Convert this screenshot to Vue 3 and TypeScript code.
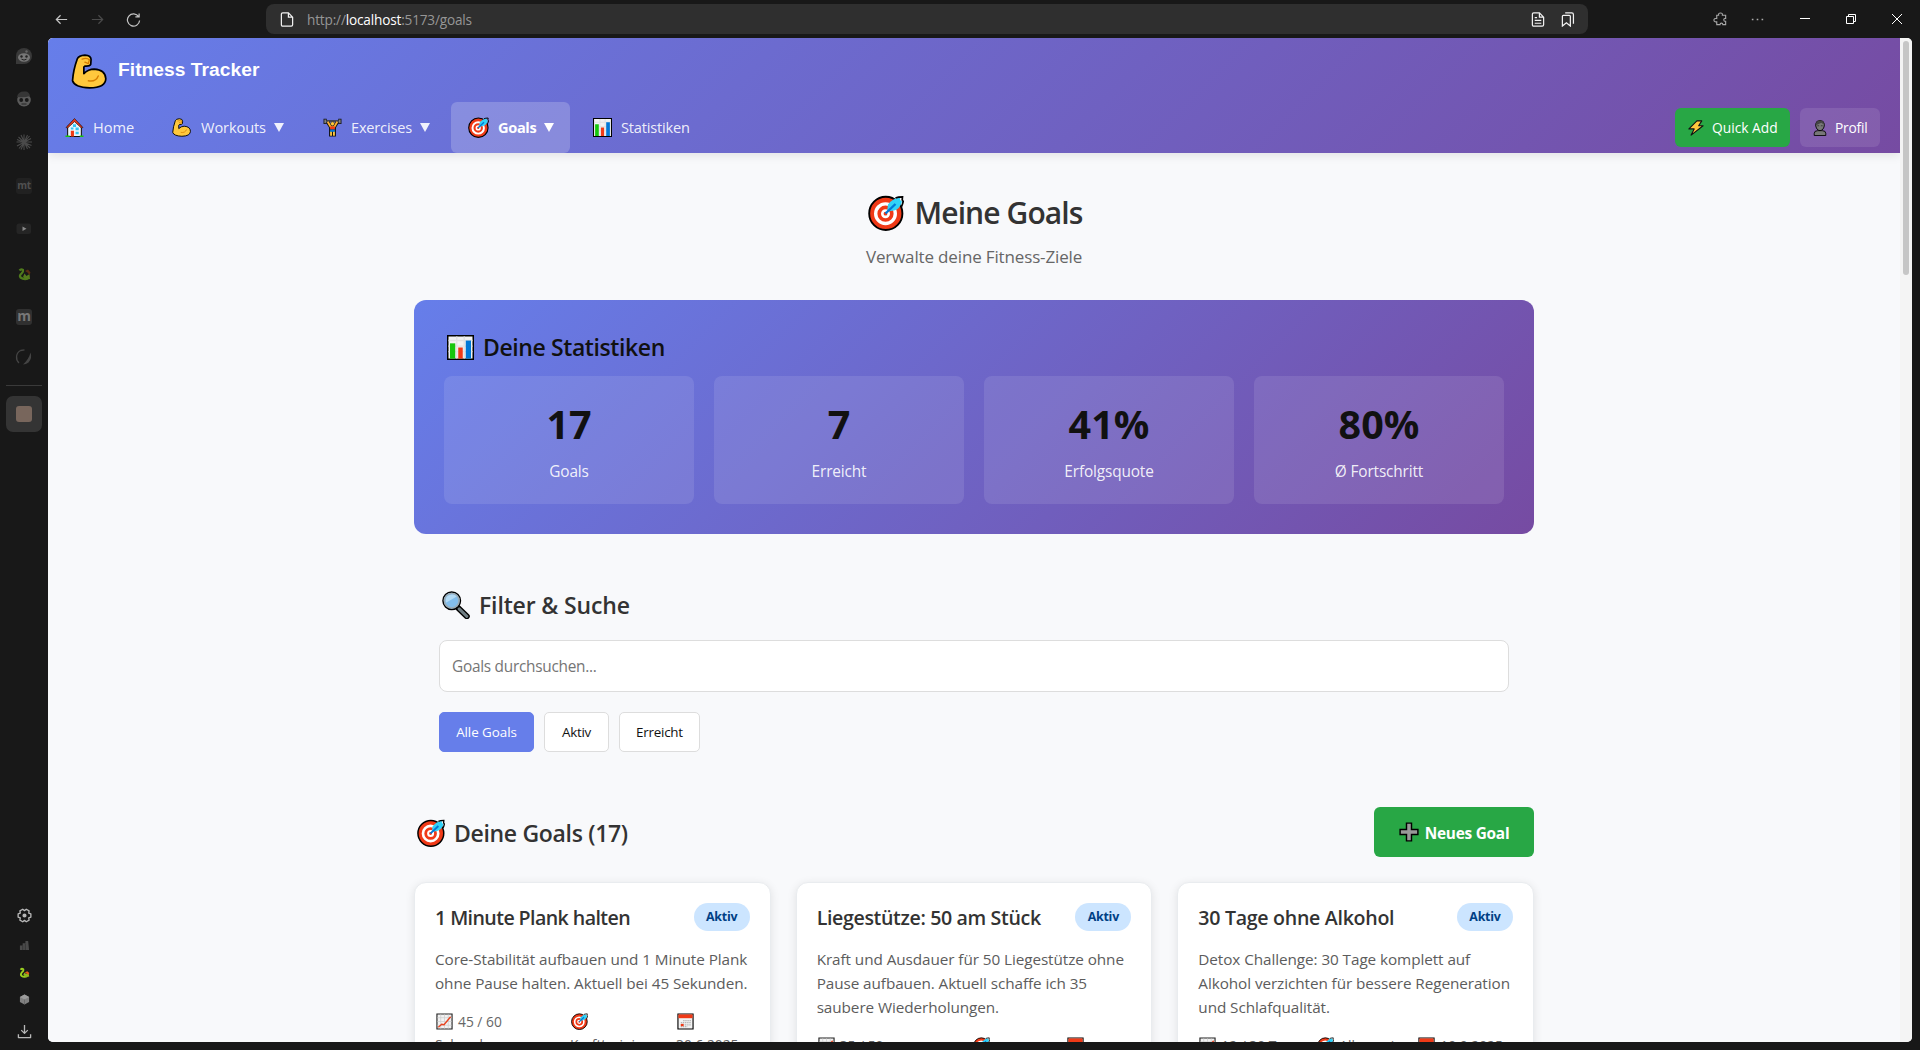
<script setup lang="ts">
interface NavItem { id: string; label: string; icon: string; menu: boolean; active?: boolean }
interface Meta { icon: string; lines: string[] }
interface Goal { id: string; title: string; text: string[]; meta: Meta[] }

const sideTabs: string[] = ['reddit', 'mask', 'burst', 'mt', 'video', 'dragon', 'moodle', 'swirl']

const navItems: NavItem[] = [
  { id: 'home', label: 'Home', icon: 'house', menu: false },
  { id: 'workouts', label: 'Workouts', icon: 'arm', menu: true },
  { id: 'exercises', label: 'Exercises', icon: 'lifter', menu: true },
  { id: 'goals', label: 'Goals', icon: 'target', menu: true, active: true },
  { id: 'stats', label: 'Statistiken', icon: 'bars', menu: false },
]

const stats = [
  { value: '17', label: 'Goals' },
  { value: '7', label: 'Erreicht' },
  { value: '41%', label: 'Erfolgsquote' },
  { value: '80%', label: 'Ø Fortschritt' },
]

const filters = ['Alle Goals', 'Aktiv', 'Erreicht']

const goals: Goal[] = [
  {
    id: 'plank',
    title: '1 Minute Plank halten',
    text: ['Core-Stabilität aufbauen und 1 Minute Plank', 'ohne Pause halten. Aktuell bei 45 Sekunden.'],
    meta: [
      { icon: 'trend', lines: ['45 / 60', 'Sekunden'] },
      { icon: 'target', lines: ['', 'Krafttraining'] },
      { icon: 'calendar', lines: ['', '30.6.2025'] },
    ],
  },
  {
    id: 'pushups',
    title: 'Liegestütze: 50 am Stück',
    text: ['Kraft und Ausdauer für 50 Liegestütze ohne', 'Pause aufbauen. Aktuell schaffe ich 35', 'saubere Wiederholungen.'],
    meta: [
      { icon: 'trend', lines: ['35 / 50'] },
      { icon: 'target', lines: [''] },
      { icon: 'calendar', lines: [''] },
    ],
  },
  {
    id: 'detox',
    title: '30 Tage ohne Alkohol',
    text: ['Detox Challenge: 30 Tage komplett auf', 'Alkohol verzichten für bessere Regeneration', 'und Schlafqualität.'],
    meta: [
      { icon: 'trend', lines: ['12 / 30 Tage'] },
      { icon: 'target', lines: ['Allgemein'] },
      { icon: 'calendar', lines: ['10.9.2025'] },
    ],
  },
]
</script>

<template>
  <div class="browser">
    <svg class="sprite" aria-hidden="true">
      <symbol id="arm" viewBox="-2 -2 104 102">
        <path d="M16 12Q20 2 38 1Q56 2 56 14L55 28Q52 34 38 33L35 36V55Q48 42 65 42Q98 44 99 70Q98 96 52 97Q8 95 2 76Q4 45 16 12Z" fill="#ffc83d" stroke="#000" stroke-width="5" stroke-linejoin="round" />
        <path d="M30 13Q44 8 51 15L48 26L38 22M48 76Q70 80 77 62" fill="none" stroke="#d67d00" stroke-width="4" stroke-linecap="round" />
      </symbol>
      <symbol id="target" viewBox="0 0 36 36">
        <circle cx="17.8" cy="18.4" r="16.6" fill="#f03a17" stroke="#000" stroke-width="1.9" />
        <circle cx="17.5" cy="18.7" r="9.8" fill="none" stroke="#fff" stroke-width="3.4" />
        <circle cx="17.5" cy="18.7" r="3.2" fill="#f03a17" stroke="#fff" stroke-width="2.6" />
        <path d="M19 16.500L20 9.500Q25 3 32 2.500L32 5L34 6.500Q32 14 26 15.500Z" fill="#31d2f7" />
        <path d="M27.500 3Q30 1.800 34.500 1.800L34.200 4.800L35.200 6.500Q34.800 9 33.500 11.500" fill="none" stroke="#000" stroke-width="1.700" />
        <path d="M17.500 18.500L27.500 9" stroke="#0078d7" stroke-width="2.400" />
      </symbol>
      <symbol id="bars" viewBox="0 0 36 36" preserveAspectRatio="none">
        <path d="M1 1H35V35H1Z" fill="#f2f2f2" stroke="#000" stroke-width="2" />
        <path d="M13 2V34M23 2V34M2 8H34M2 16H34M2 24H34" stroke="#e2e2e2" stroke-width="2" />
        <path d="M4 12H11V34H4Z" fill="#16c60c" />
        <path d="M15 18H21V34H15Z" fill="#f03a17" />
        <path d="M25 8H32V34H25Z" fill="#0078d7" />
      </symbol>
      <symbol id="trend" viewBox="0 0 36 36">
        <path d="M2 2H34V34H2Z" fill="#f2f2f2" stroke="#222" stroke-width="2.4" />
        <path d="M10 3V33M18 3V33M26 3V33M3 10H33M3 18H33M3 26H33" stroke="#cfcfcf" stroke-width="1.6" />
        <path d="M5 30L12 24L17 25L31 8" fill="none" stroke="#e8431f" stroke-width="3" />
      </symbol>
      <symbol id="calendar" viewBox="0 0 36 36">
        <path d="M2 2H34V34H2Z" fill="#f2f2f2" stroke="#000" stroke-width="2.4" />
        <path d="M3 3H33V11H3Z" fill="#f03a17" />
        <path d="M13 16H30M8 20.5H30M8 25H30M8 29H22" stroke="#b5b5b5" stroke-width="2.6" stroke-dasharray="3 1.5" />
        <path d="M8 23H14V28H8Z" fill="#f03a17" />
      </symbol>
      <symbol id="house" viewBox="0 0 36 36">
        <path d="M5 16L18 4L31 16V35H5Z" fill="#eef4fa" stroke="#111" stroke-width="2" />
        <path d="M18 1L34 18L31 19L18 7L5 19L2 18Z" fill="#e8371b" stroke="#111" stroke-width="1.2" />
        <path d="M11 24H17V35H11Z" fill="#f03a17" />
        <path d="M15 12H21V17H15ZM11 18H16V22H11ZM20 18H26V23H20ZM20 26H26V31H20Z" fill="#31c5f4" />
        <path d="M1 33H9V36H1ZM28 33H35V36H28Z" fill="#16c60c" />
      </symbol>
      <symbol id="lifter" viewBox="0 0 36 36">
        <path d="M2 6H34" stroke="#111" stroke-width="3.5" />
        <path d="M4 1.500V11.500M32 1.500V11.500" stroke="#111" stroke-width="6" />
        <path d="M4 6H32" stroke="#aaa" stroke-width="1.2" />
        <path d="M4 3V10M32 3V10" stroke="#999" stroke-width="2.4" />
        <path d="M9 8L15 17.500H21L27 8" fill="none" stroke="#111" stroke-width="6.5" stroke-linejoin="round" />
        <path d="M11.500 16H24.500V35H11.500Z" fill="#111" />
        <path d="M9 7L15 17.500H21L27 7" fill="none" stroke="#ffb02e" stroke-width="3.6" stroke-linejoin="round" />
        <path d="M13.500 25H17V33.500H13.500ZM19 25H22.500V33.500H19Z" fill="#ffc83d" />
        <circle cx="18" cy="11" r="3.800" fill="#ffc83d" stroke="#111" stroke-width=".8" />
        <path d="M13.500 16H22.500V22H13.500Z" fill="#f03a17" />
        <path d="M13.500 22H22.500V26H13.500Z" fill="#0078d7" />
      </symbol>
      <symbol id="bolt" viewBox="0 0 36 36">
        <path d="M20 2H31L24 13H34L7 34L14 20H2Z" fill="#ffc83d" stroke="#111" stroke-width="2.4" stroke-linejoin="round" />
      </symbol>
      <symbol id="person" viewBox="0 0 30 36">
        <path d="M2 35V30Q2 24 10 24H20Q28 24 28 30V35Z" fill="#777" stroke="#000" stroke-width="2" />
        <path d="M5 10Q6 1 15 1Q24 1 25 10Q24 23 15 24Q6 23 5 10Z" fill="#777" stroke="#000" stroke-width="2" />
        <path d="M5 10Q7 1 15 1Q24 1 25 11L18 6L7 11Z" fill="#444" />
        <path d="M9 13H13M17 13H21" stroke="#333" stroke-width="2" />
      </symbol>
      <symbol id="lens" viewBox="0 0 36 36">
        <path d="M20 21L32 32.5" stroke="#000" stroke-width="7.5" stroke-linecap="round" />
        <path d="M22 23L32 32.5" stroke="#6f7d82" stroke-width="4" stroke-linecap="round" />
        <circle cx="12.5" cy="12.5" r="11.2" fill="#83beec" stroke="#000" stroke-width="2" />
        <circle cx="12.5" cy="12.5" r="9.4" fill="none" stroke="#9cabb3" stroke-width="2" />
        <path d="M5 15Q3 5 13 4.500Q17 4.500 19 7Z" fill="#b3dbf5" />
      </symbol>
      <symbol id="plus" viewBox="0 0 36 36">
        <path d="M13.500 2H22.500V13.500H34V22.500H22.500V34H13.500V22.500H2V13.500H13.500Z" fill="#999" stroke="#000" stroke-width="2.6" />
      </symbol>

      <symbol id="reddit" viewBox="0 0 24 24">
        <circle cx="12" cy="12" r="8" fill="#393939" /><path d="M4 12V20H12Z" fill="#393939" />
        <ellipse cx="12" cy="13.500" rx="6" ry="4.200" fill="#777" />
        <circle cx="9.500" cy="12.500" r="1.200" fill="#222" /><circle cx="14.500" cy="12.500" r="1.200" fill="#222" />
        <path d="M9.500 15.200Q12 17 14.500 15.200" stroke="#222" fill="none" /><circle cx="14.500" cy="7.500" r="1.200" fill="#666" />
      </symbol>
      <symbol id="mask" viewBox="0 0 24 24">
        <ellipse cx="12" cy="13" rx="6.800" ry="6.500" fill="#5b5b5b" />
        <path d="M5 10Q6 4 13 4.500Q17 4 18 9Q12 11 5 10Z" fill="#363636" />
        <circle cx="9.200" cy="13" r="1.900" fill="#181818" /><circle cx="14.800" cy="13" r="1.900" fill="#181818" />
        <path d="M9.500 17H14.500" stroke="#252525" />
      </symbol>
      <symbol id="burst" viewBox="0 0 24 24">
        <path d="M12 4.500V20M4.500 12H20M6.500 7L18 18M17.500 6L7 18.500M9 5L15.500 19M15.500 5L9 19.500M5 9.500L19.500 15.500M19 8.500L5 16" stroke="#4a4a4a" stroke-width="1.100" />
      </symbol>
      <symbol id="video" viewBox="0 0 24 24">
        <rect x="4.500" y="7.500" width="14.500" height="10.500" rx="2.500" fill="#252525" /><path d="M10.500 10.500L14.500 12.800L10.500 15Z" fill="#8a8a8a" />
      </symbol>
      <symbol id="dragon" viewBox="0 0 24 24">
        <path d="M7.500 11.500Q9 9.500 11 11Q11.500 13 9.500 14.500Q7 16.500 8.500 18.500Q12 21 16 19.500" fill="none" stroke="#4f7a1c" stroke-width="2.200" />
        <path d="M11 18L12.500 14.500L14.500 17L17.500 15L18 20L14 20.500Z" fill="#557a1c" />
        <path d="M13 12L16 10.500L18.500 13.500L17.500 16L15.500 13.500Z" fill="#5b2e12" />
      </symbol>
      <symbol id="swirl" viewBox="0 0 24 24">
        <path d="M8.500 5.500C3.500 8 3.500 15 7 18M8.500 5.500L12.500 4.800" fill="none" stroke="#444" stroke-width="1.300" />
        <path d="M18.500 7.500Q20.500 13 16.500 17.500Q14 19.500 11 19.500Q17 14 18.500 7.500Z" fill="#444" />
      </symbol>
    </svg>

    <header class="topbar">
      <div class="history">
        <svg viewBox="0 0 16 16"><path d="M14 8H2.500M7 3.500L2.500 8L7 12.500" /></svg>
        <svg class="dim" viewBox="0 0 16 16"><path d="M2 8H13.500M9 3.500L13.500 8L9 12.500" /></svg>
        <svg viewBox="0 0 16 16"><path d="M13.500 5A6.500 6.500 0 1 0 14.500 9M14 1.500V5.300H10" /></svg>
      </div>
      <div class="address">
        <svg class="doc" viewBox="0 0 14 16"><path d="M2.500 1H8.500L13 5.500V13.500Q13 15 11.500 15H2.500Q1 15 1 13.500V2.500Q1 1 2.500 1ZM8.500 1V5.500H13" /></svg>
        <span class="url">http://<b>localhost</b>:5173/goals</span>
        <svg class="doc reader" viewBox="0 0 14 16"><path d="M2.500 1H8.500L13 5.500V13.500Q13 15 11.500 15H2.500Q1 15 1 13.500V2.500Q1 1 2.500 1ZM8.500 1V5.500H13M3.500 6H6M3.500 9H10.500M3.500 12H10.500" /></svg>
        <svg class="doc" viewBox="0 0 14 16"><path d="M1 4.500Q1 3.500 2 3.500H8.500Q9.500 3.500 9.500 4.500V15L5.300 11.500L1 15ZM4 1H11Q12.800 1 12.800 3V12.500" /></svg>
      </div>
      <div class="tools">
        <svg class="puzzle" viewBox="0 0 16 16"><path d="M4 3.500H6Q5.500 1 8 1Q10.500 1 10 3.500H13.500V7Q11.500 6.500 11.500 8.500Q11.500 10 13.500 10V13.500H10.500Q10.500 11.800 9 11.800Q7.500 11.800 7.500 13.500H4V10.500Q1 11 1 8.500Q1 6.500 4 7Z" /></svg>
        <svg class="dots" viewBox="0 0 16 16"><path d="M1 7H3V9H1ZM7 7H9V9H7ZM13 7H15V9H13Z" /></svg>
        <svg class="win" viewBox="0 0 10 10"><path d="M0 4.500H10" /></svg>
        <svg class="win" viewBox="0 0 10 10"><path d="M.5 2.500H7.500V9.500H.5ZM2.500 2.500V.5H9.500V7.500H7.500" /></svg>
        <svg class="win" viewBox="0 0 10 10"><path d="M0 0L10 10M10 0L0 10" /></svg>
      </div>
    </header>

    <div class="body">
      <aside class="side">
        <template v-for="tab in sideTabs" :key="tab">
          <span v-if="tab === 'mt'" class="tile mt">mt</span>
          <span v-else-if="tab === 'moodle'" class="tile moodle">m</span>
          <svg v-else :class="['slot', tab]"><use :href="'#' + tab" /></svg>
        </template>
        <i class="rule"></i>
        <span class="current"><i></i></span>
        <span class="spacer"></span>
        <svg class="tool" viewBox="0 0 16 16"><path d="M14.800 6.300V9.700L12.500 10.600L12.900 13L9.900 14.700L8 13.200L6.100 14.700L3.100 13L3.500 10.600L1.200 9.700V6.300L3.500 5.400L3.100 3L6.100 1.300L8 2.800L9.900 1.300L12.900 3L12.500 5.400Z" /><circle cx="8" cy="8" r="1.500" fill="#bbb" /></svg>
        <svg class="small" viewBox="0 0 12 12"><path d="M1 11V6H4V3.500H7V1H10L11 11Z" fill="#4a4a4a" /><path d="M4 11V6M7 11V4" stroke="#2e2e2e" stroke-width=".7" /></svg>
        <svg class="small" viewBox="6 7 13 14"><path d="M7.500 10.500Q9 8.500 11 10Q11.500 12 9.500 13.500Q7 16 8.500 18Q12 20.500 16 18.500" fill="none" stroke="#9bd020" stroke-width="2.400" /><path d="M11 17L12.500 14L14.500 16L17.500 14L18.500 19L14 20Z" fill="#8fb81d" /><path d="M13 14L16 12.500L18.500 14.500L18 17L15.500 15.500Z" fill="#e35a19" /></svg>
        <svg class="small" viewBox="0 0 12 12"><path d="M6 .5L11 3.200V8.800L6 11.500L1 8.800V3.200Z" fill="#808080" /><path d="M1 3.200L6 6L11 3.200L6 .5Z" fill="#9c9c9c" /><path d="M6 6V11.500" stroke="#5c5c5c" stroke-width=".7" /></svg>
        <svg class="tool last" viewBox="0 0 16 16"><path d="M8 1V10M4.500 6.500L8 10L11.500 6.500M1.500 11V14.500H14.500V11" /></svg>
      </aside>

      <div class="page">
        <div class="content">
          <header class="header">
            <div class="brand">
              <svg><use href="#arm" /></svg>
              <span>Fitness Tracker</span>
            </div>
            <nav class="nav">
              <a v-for="item in navItems" :key="item.id" :class="['link', item.id, { active: item.active }]">
                <svg><use :href="'#' + item.icon" /></svg>
                <span>{{ item.label }}</span>
                <i v-if="item.menu" class="caret"></i>
              </a>
              <div class="actions">
                <button class="quick"><svg><use href="#bolt" /></svg><span>Quick Add</span></button>
                <button class="profile"><svg><use href="#person" /></svg><span>Profil</span></button>
              </div>
            </nav>
          </header>

          <main class="main">
            <h1><svg><use href="#target" /></svg><span>Meine Goals</span></h1>
            <p class="sub">Verwalte deine Fitness-Ziele</p>

            <section class="stats">
              <h2><svg><use href="#bars" /></svg><span>Deine Statistiken</span></h2>
              <div class="stat-grid">
                <div v-for="s in stats" :key="s.label" class="stat">
                  <strong>{{ s.value }}</strong>
                  <span>{{ s.label }}</span>
                </div>
              </div>
            </section>

            <section class="filter">
              <h2><svg><use href="#lens" /></svg><span>Filter &amp; Suche</span></h2>
              <input type="text" placeholder="Goals durchsuchen..." />
              <div class="chips">
                <button v-for="(f, i) in filters" :key="f" :class="{ on: i === 0 }">{{ f }}</button>
              </div>
            </section>

            <section class="goals">
              <div class="goals-head">
                <h2><svg><use href="#target" /></svg><span>Deine Goals (17)</span></h2>
                <button class="new"><svg><use href="#plus" /></svg><span>Neues Goal</span></button>
              </div>
              <div class="cards">
                <article v-for="g in goals" :key="g.id" :class="['card', g.id]">
                  <div class="card-head">
                    <h3>{{ g.title }}</h3>
                    <span class="badge">Aktiv</span>
                  </div>
                  <p><span v-for="line in g.text" :key="line">{{ line }}</span></p>
                  <div class="meta">
                    <div v-for="m in g.meta" :key="m.icon">
                      <span v-for="(line, i) in m.lines" :key="i" class="meta-line">
                        <svg v-if="i === 0"><use :href="'#' + m.icon" /></svg>{{ line }}
                      </span>
                    </div>
                  </div>
                </article>
              </div>
            </section>
          </main>
        </div>
        <div class="scroll"><i></i></div>
      </div>
    </div>
  </div>
</template>

<style>
body { background: #181818; overflow: hidden; }
</style>

<style scoped>
.browser, .browser * { box-sizing: border-box; }
.browser {
  display: flex; flex-direction: column; width: 1920px; height: 1050px; overflow: hidden;
  background: #181818; font-family: "Open Sans", "Noto Sans", sans-serif; letter-spacing: -0.24px;
}
.sprite { position: absolute; width: 0; height: 0; }
svg { display: block; flex: none; }
h1, h2, h3, p { margin: 0; font-weight: 600; white-space: nowrap; }
button { font-family: inherit; letter-spacing: inherit; padding: 0; border: 0; white-space: nowrap; }

.topbar { display: flex; align-items: center; height: 38px; flex: none; }
.history { display: flex; width: 266px; padding-left: 54px; gap: 21px; }
.history svg { width: 15px; height: 15px; fill: none; stroke: #c4c4c4; stroke-width: 1.3; }
.history .dim { stroke: #4a4a4a; }
.address { display: flex; align-items: center; width: 1322px; height: 30px; padding: 0 13px 0 14px; background: #2f2f2f; border-radius: 8px; }
.doc { width: 14px; height: 15px; fill: none; stroke: #f2f2f2; stroke-width: 1.3; }
.url { margin: 1px 0 0 13px; font-size: 13.6px; letter-spacing: -0.17px; color: #969696; flex: 1; }
.url b { font-weight: 400; color: #fff; }
.reader { margin-right: 16px; }
.tools { display: flex; align-items: center; margin-left: 125px; }
.puzzle { width: 15px; height: 15px; fill: none; stroke: #a8a8a8; stroke-width: 1.2; }
.dots { width: 13px; height: 13px; margin: 0 36px 0 23px; fill: #aaa; }
.win { width: 10px; height: 10px; fill: none; stroke: #fff; stroke-width: 1; margin-right: 36px; }
.win:last-child { margin-right: 0; }

.body { display: flex; height: 1004px; }
.side { display: flex; flex-direction: column; align-items: center; width: 48px; padding-top: 6px; }
.slot { width: 24px; height: 24px; margin-bottom: 19px; }
.tile { width: 16px; height: 16px; margin: 5px 0 22px; border-radius: 3px; background: #212121; color: #505050; font-size: 10px; font-weight: 700; line-height: 14px; text-align: center; }
.moodle { background: #303030; color: #777; font-size: 14px; line-height: 14px; margin-top: 7px; margin-bottom: 20px; }
.rule { width: 36px; height: 1px; background: #3a3a3a; margin-top: -3px; }
.current { display: grid; place-items: center; width: 36px; height: 36px; margin-top: 10px; border-radius: 7px; background: #343434; }
.current i { width: 16px; height: 16px; border-radius: 3px; background: #78665c; }
.spacer { flex: 1; }
.tool { width: 15px; height: 15px; fill: none; stroke: #b8b8b8; stroke-width: 1.4; stroke-linejoin: round; }
.small { width: 11px; height: 11px; margin-top: 16px; }
.small:nth-last-child(4) { margin-top: 17px; }
.last { margin: 19px 0 3px; }

.page { display: flex; width: 1864px; height: 1004px; overflow: hidden; border-radius: 5px; background: #f8f9fa; }
.content { width: 1852px; background: #f8f9fb; }
.scroll { width: 12px; padding: 3px; background: #f4f4f4; }
.scroll i { display: block; width: 6px; height: 234px; border-radius: 3px; background: #c6c6c6; }

.header { height: 115px; color: #fff; background: linear-gradient(135deg, #667eea 0%, #764ba2 100%); box-shadow: 0 2px 10px rgba(0, 0, 0, 0.1); }
.brand { display: flex; align-items: center; gap: 11px; height: 64px; padding-left: 23px; font: 700 19.2px/1 "Liberation Sans", Arial, sans-serif; letter-spacing: 0.04px; }
.brand svg { width: 36px; height: 35px; margin-top: 3px; }
.brand span { margin-top: -1px; }
.nav { display: flex; height: 51px; }
.link { display: flex; align-items: center; height: 51px; margin-right: 5px; padding-left: 16px; border-radius: 6px; font-size: 14.6px; letter-spacing: -0.2px; color: rgba(255, 255, 255, 0.9); }
.link svg { width: 19px; height: 19px; margin-right: 10px; }
.link span { margin-top: -2px; }
.link.home { width: 101px; padding-left: 17px; letter-spacing: 0; }
.link.home svg { margin-right: 9px; }
.link.workouts { width: 147px; padding-left: 18px; letter-spacing: -0.1px; }
.link.exercises { width: 140px; padding-left: 17px; letter-spacing: -0.2px; }
.link.exercises svg { margin-right: 9px; }
.link.goals { width: 119px; padding-left: 17px; letter-spacing: -0.35px; }
.link.stats { width: 132px; padding-left: 18px; }
.link.stats svg { margin-right: 9px; }
.active { background: rgba(255, 255, 255, 0.2); color: #fff; font-weight: 700; }
.link.active svg { width: 21px; height: 21px; margin-right: 9px; }
.caret { width: 0; height: 0; margin-left: 8px; border: 5px solid transparent; border-top: 9px solid currentColor; border-bottom: 0; }
.actions { display: flex; gap: 10px; margin: 6px 20px 0 auto; }
.actions button { display: flex; align-items: center; height: 39px; padding-left: 13px; border-radius: 6px; color: #fff; font-size: 13.8px; }
.actions .quick { width: 115px; background: #28a745; letter-spacing: 0; }
.actions .profile { width: 80px; background: rgba(255, 255, 255, 0.1); }
.quick svg { width: 16px; height: 16px; margin-right: 8px; }
.profile svg { width: 14px; height: 16px; margin-right: 8px; }

.main { width: 1120px; margin: 0 auto; padding-top: 37px; color: #333; }
h1 { display: flex; align-items: center; justify-content: center; gap: 11px; height: 44px; padding-left: 2px; font-size: 30px; line-height: 44px; letter-spacing: -0.9px; }
h1 svg { width: 36px; height: 36px; margin-top: 2px; }
h1 span { margin-top: 1px; }
.sub { margin-top: 11px; height: 23px; font-size: 17px; line-height: 23px; letter-spacing: -0.15px; font-weight: 400; color: #666; text-align: center; }
h2 { display: flex; align-items: center; height: 34px; font-size: 23px; line-height: 34px; gap: 9px; }
h2 svg { width: 28px; height: 28px; }

section.stats { height: 234px; margin-top: 32px; padding: 30px; border-radius: 12px; background: linear-gradient(135deg, #667eea 0%, #764ba2 100%); }
.stats h2 { color: #111; padding-left: 3px; letter-spacing: -0.4px; }
.stats h2 svg { width: 27px; height: 25px; }
.stat-grid { display: grid; grid-template-columns: repeat(4, 1fr); gap: 20px; margin-top: 12px; }
.stat { display: flex; flex-direction: column; align-items: center; height: 128px; padding-top: 20px; border-radius: 8px; background: rgba(255, 255, 255, 0.1); }
.stat strong { height: 56px; font-size: 39.5px; line-height: 56px; letter-spacing: 0; color: #111; }
.stat span { margin-top: 8px; font-size: 15.4px; line-height: 23px; letter-spacing: -0.15px; color: rgba(255, 255, 255, 0.9); }

.filter { margin-top: 54px; padding: 0 25px; }
.filter h2 { padding-left: 3px; letter-spacing: -0.14px; }
.filter input { display: block; width: 1070px; height: 52px; margin-top: 18px; padding: 0 12px; border: 1px solid #ddd; border-radius: 8px; background: #fff; font: 400 15.4px "Open Sans", sans-serif; letter-spacing: -0.27px; }
.filter input::placeholder { color: #757575; }
.chips { display: flex; gap: 10px; margin-top: 20px; }
.chips button { width: 65px; height: 40px; border: 1px solid #ddd; border-radius: 5px; background: #fff; color: #111; font-size: 13.4px; }
.chips button:first-child { width: 95px; letter-spacing: -0.05px; }
.chips button:last-child { width: 81px; }
.chips .on { border-color: #667eea; background: #667eea; color: #fff; }

section.goals { margin-top: 55px; }
.goals-head { display: flex; align-items: center; justify-content: space-between; height: 50px; }
.goals-head h2 { padding: 1px 0 0 3px; letter-spacing: -0.32px; }
.new { display: flex; align-items: center; justify-content: center; gap: 6px; width: 160px; height: 50px; border-radius: 6px; background: #28a745; color: #fff; font-size: 15.4px; font-weight: 700; }
.new svg { width: 20px; height: 20px; }
.new span { margin-top: 2px; }
.cards { display: grid; grid-template-columns: repeat(3, minmax(0, 1fr)); gap: 25px; margin-top: 25px; }
.card { height: 260px; padding: 20px; border: 1px solid #e9ecef; border-radius: 12px; background: #fff; box-shadow: 0 2px 10px rgba(0, 0, 0, 0.1); }
.card-head { display: flex; justify-content: space-between; height: 28px; }
h3 { padding-top: 1px; font-size: 19.6px; line-height: 28px; letter-spacing: -0.36px; }
.plank h3 { letter-spacing: -0.58px; }
.detox h3 { letter-spacing: -0.3px; }
.badge { width: 56px; height: 28px; border-radius: 14px; background: #cce5ff; color: #004085; font-size: 12.4px; font-weight: 700; line-height: 28px; text-align: center; }
.card p { margin: 16px 0 15px; font-weight: 400; font-size: 15.3px; line-height: 24px; letter-spacing: -0.08px; color: #5c5c5c; }
.card p span { display: block; }
.meta { display: grid; grid-template-columns: 135px 106px auto; color: #666; font-size: 13.8px; line-height: 23px; letter-spacing: 0; }
.pushups .meta { grid-template-columns: 155px 94px auto; }
.detox .meta { grid-template-columns: 118px 101px auto; }
.meta-line { display: flex; align-items: center; height: 23px; white-space: nowrap; }
.meta svg { width: 17px; height: 17px; margin: 0 5px 0 1px; }
</style>
